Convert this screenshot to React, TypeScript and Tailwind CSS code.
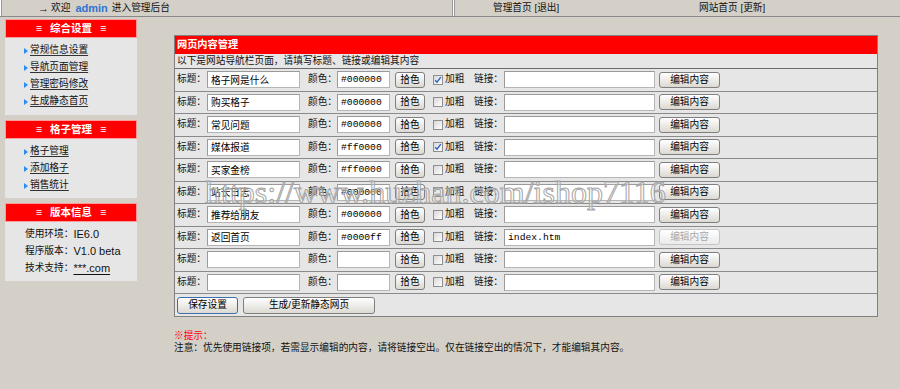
import React from 'react';

type NavRow = { title: string; color: string; bold: boolean; link: string };

// 导航栏页面数据
const navRows: NavRow[] = [
    { title: '格子网是什么', color: '#000000', bold: true, link: '' },
    { title: '购买格子', color: '#000000', bold: false, link: '' },
    { title: '常见问题', color: '#000000', bold: false, link: '' },
    { title: '媒体报道', color: '#ff0000', bold: true, link: '' },
    { title: '买家金榜', color: '#ff0000', bold: false, link: '' },
    { title: '站长日志', color: '#000000', bold: false, link: '' },
    { title: '推荐给朋友', color: '#000000', bold: false, link: '' },
    { title: '返回首页', color: '#0000ff', bold: false, link: 'index.htm' },
    { title: '', color: '', bold: false, link: '' },
    { title: '', color: '', bold: false, link: '' },
];

const menuSections = [
    { title: '综合设置', links: ['常规信息设置', '导航页面管理', '管理密码修改', '生成静态首页'] },
    { title: '格子管理', links: ['格子管理', '添加格子', '销售统计'] },
];

const btnBase =
    'flex shrink-0 items-center justify-center whitespace-nowrap rounded-[3px] border bg-linear-to-b from-white to-[#dcd9d2] text-[9.7px] leading-none';

const inputBase =
    'h-[17px] shrink-0 border border-[#b5b5b5] border-t-[#9a9a9a] border-l-[#9a9a9a] bg-white px-[3px] text-[9.7px] text-black outline-none';

const label = 'shrink-0 whitespace-nowrap';

const SideHeader: React.FC<{ title: string }> = ({ title }) => (
    <div className="flex h-[19px] items-center justify-center gap-[8px] border border-[#ff9a9a] bg-[#ff0000] text-[10.5px] font-bold text-white">
        <span className="font-normal">≡</span>
        <span>{title}</span>
        <span className="font-normal">≡</span>
    </div>
);

const Arrow = () => (
    <svg width="4" height="6" viewBox="0 0 4 6" className="shrink-0">
        <path d="M0 0 L4 3 L0 6 Z" fill="#2a8cf0" />
    </svg>
);

const CheckBox: React.FC<{ checked: boolean }> = ({ checked }) => (
    <span className="flex h-[10px] w-[10px] items-center justify-center border border-[#8f8f8f] bg-linear-to-br from-[#d8d8d8] to-white">
        {checked && (
            <svg width="8" height="8" viewBox="0 0 8 8">
                <path d="M1.2 4.2 L3 6.2 L6.8 1.2" stroke="#2d5fc4" strokeWidth="1.4" fill="none" />
            </svg>
        )}
    </span>
);

const Row: React.FC<{ row: NavRow }> = ({ row }) => {
    const disabled = row.link !== '';
    return (
        <div className="flex h-[22.5px] items-center border-b border-[#8a8a8a] pl-[2px]">
            <span className={`${label} w-[30px]`}>标题：</span>
            <input readOnly value={row.title} className={`${inputBase} w-[93px]`} />
            <span className={`${label} ml-[8px] w-[29px]`}>颜色：</span>
            <input
                readOnly
                value={row.color}
                className={`${inputBase} w-[53px] font-['Liberation_Mono',monospace] text-[9.5px]`}
            />
            <button className={`${btnBase} ml-[5px] h-[16px] w-[30px] border-[#7f7f7f] text-black`}>拾色</button>
            <span className="ml-[8px] shrink-0">
                <CheckBox checked={row.bold} />
            </span>
            <span className={`${label} ml-[2px] w-[29px]`}>加粗</span>
            <span className={`${label} w-[30px]`}>链接：</span>
            <input
                readOnly
                value={row.link}
                className={`${inputBase} w-[151px] font-['Liberation_Mono',monospace] text-[9.5px]`}
            />
            <button
                className={`${btnBase} ml-[4px] h-[16px] w-[61px] ${
                    disabled ? 'border-[#c4c4c4] from-[#f7f7f7] to-[#ebebeb] text-[#a8a8a8]' : 'border-[#7f7f7f] text-black'
                }`}
            >
                编辑内容
            </button>
        </div>
    );
};

export default function App() {
    return (
        <div className="relative h-[389px] w-[900px] overflow-hidden bg-[#d4d0c8] font-['Liberation_Sans','Noto_Sans_CJK_SC',sans-serif] text-[9.7px] text-[#111]">
            {/* 顶部栏 */}
            <div className="flex h-[17px] border-b border-[#8a8a8a]">
                <div className="h-full w-[1px] bg-white" />
                <div className="h-full w-[1px] bg-[#9a9a9a]" />
                <div className="flex w-[450px] items-center pl-[36px]">
                    <span className="text-[11px]">→</span>
                    <span className="ml-[2px]">欢迎</span>
                    <span className="ml-[5px] text-[11px] font-bold text-[#2f74d0]">admin</span>
                    <span className="ml-[4px]">进入管理后台</span>
                </div>
                <div className="h-full w-[3px] border-x border-[#9a9a9a] bg-white" />
                <div className="flex items-center pl-[38px]">
                    <span className="w-[206px]">管理首页 [退出]</span>
                    <span>网站首页 [更新]</span>
                </div>
            </div>

            <div className="flex">
                {/* 左侧菜单 */}
                <aside className="ml-[5px] mt-[2px] flex w-[132px] flex-col gap-[5px]">
                    {menuSections.map((sec, i) => (
                        <div key={sec.title}>
                            <SideHeader title={sec.title} />
                            <div className={`bg-[#e6e6e6] pl-[19px] pt-[4px] ${i === 0 ? 'pb-[5px]' : 'pb-[4px]'}`}>
                                {sec.links.map((l) => (
                                    <div key={l} className="flex h-[17px] items-center gap-[2px]">
                                        <Arrow />
                                        <span className="underline decoration-[#333] underline-offset-2">{l}</span>
                                    </div>
                                ))}
                            </div>
                        </div>
                    ))}
                    <div>
                        <SideHeader title="版本信息" />
                        <div className="bg-[#e6e6e6] pb-[4px] pl-[20px] pt-[4px]">
                            <div className="flex h-[17px] items-center">
                                使用环境：<span className="text-[11px]">IE6.0</span>
                            </div>
                            <div className="flex h-[17px] items-center">
                                程序版本：<span className="text-[11px]">V1.0 beta</span>
                            </div>
                            <div className="flex h-[17px] items-center">
                                技术支持：<span className="text-[11px] underline underline-offset-2">***.com</span>
                            </div>
                        </div>
                    </div>
                </aside>

                {/* 主内容 */}
                <main className="ml-[37px] mt-[18px] w-[704px]">
                    <div className="border border-[#808080] bg-[#e6e6e6]">
                        <div className="flex h-[18px] items-center bg-[#ff0000] pl-[2px] text-[10.2px] font-bold text-white">
                            网页内容管理
                        </div>
                        <div className="flex h-[15px] items-center border-b border-[#6a6a6a] pl-[2px]">
                            以下是网站导航栏页面，请填写标题、链接或编辑其内容
                        </div>
                        {navRows.map((r, i) => (
                            <Row key={i} row={r} />
                        ))}
                        <div className="flex h-[22px] items-center gap-[5px] pl-[2px]">
                            <button className={`${btnBase} h-[17px] w-[61px] border-[#3d6fb0] text-black`}>保存设置</button>
                            <button className={`${btnBase} h-[17px] w-[132px] border-[#7f7f7f] text-black`}>
                                生成/更新静态网页
                            </button>
                        </div>
                    </div>

                    <div className="mt-[13px] leading-[12px]">
                        <div className="text-[#ff0000]">※提示：</div>
                        <div>注意：优先使用链接项，若需显示编辑的内容，请将链接空出。仅在链接空出的情况下，才能编辑其内容。</div>
                    </div>
                </main>
            </div>

            {/* 水印 */}
            <div className="pointer-events-none absolute left-[205px] top-[176px] whitespace-nowrap font-['Liberation_Serif',serif] text-[32px] leading-none text-white/30 [-webkit-text-stroke:1px_#a5a5a5]">
                https://www.huzhan.com/ishop7116
            </div>
        </div>
    );
}
